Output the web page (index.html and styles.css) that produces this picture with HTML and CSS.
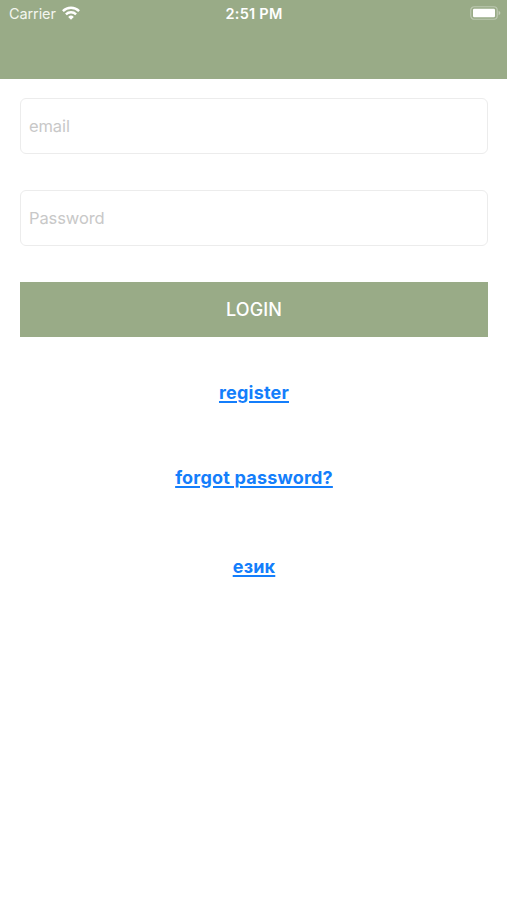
FILE: index.html
```html
<!DOCTYPE html>
<html lang="en">
<head>
  <meta charset="UTF-8">
  <title>Login</title>
  <meta name="viewport" content="width=device-width, initial-scale=1.0">
  <link rel="stylesheet" href="styles.css">
</head>
<body>
  <header class="header">
    <div class="status-bar">
      <div class="carrier">
        <span>Carrier</span>
        <svg class="wifi" viewBox="0 0 18 14" width="18" height="14">
          <path d="M.9 5.1a11.6 11.6 0 0 1 16.2 0M3.9 8.3a7.3 7.3 0 0 1 10.2 0" fill="none" stroke="#fff" stroke-width="2.4"/>
          <path d="M9 13.8L6.2 10.9a4 4 0 0 1 5.6 0z" fill="#fff"/>
        </svg>
      </div>
      <div class="time">2:51 PM</div>
      <svg class="battery" viewBox="0 0 31 14" width="31" height="14">
        <rect x="0.75" y="0.75" width="26.5" height="12.5" rx="3.5" fill="none" stroke="#fff" stroke-width="1.2" stroke-opacity="0.35"/>
        <rect x="3" y="2.7" width="22" height="8.6" rx="1.2" fill="#fff"/>
        <path d="M28.6 4.8q1.8.7 1.8 2.2t-1.8 2.2z" fill="#fff" fill-opacity="0.4"/>
      </svg>
    </div>
  </header>

  <form class="login-form">
    <input type="text" name="email" placeholder="email">
    <input type="password" name="password" placeholder="Password">
    <button type="submit">LOGIN</button>
  </form>

  <nav class="links">
    <a href="#">register</a>
    <a href="#">forgot password?</a>
    <a class="language" href="#" lang="bg">език</a>
  </nav>
</body>
</html>
```
FILE: styles.css
```css
body {
  margin: 0;
  font-family: Inter, sans-serif;
  background: #fff;
}

.header {
  height: 79px;
  background: #99ab87;
}

.status-bar {
  display: grid;
  grid-template-columns: 1fr auto 1fr;
  align-items: center;
  height: 26px;
  padding: 0 6px 0 9px;
  color: #fff;
  font-size: 14.5px;
}

.carrier {
  display: flex;
  align-items: center;
  gap: 6px;
  color: #f3f6ef;
  letter-spacing: -0.1px;
}

.time {
  padding-right: 2px;
  font-weight: 600;
  letter-spacing: 0.25px;
}

.battery {
  justify-self: end;
}

.login-form {
  display: flex;
  flex-direction: column;
  gap: 36px;
  padding: 19px 19px 0 20px;
}

input {
  box-sizing: border-box;
  width: 100%;
  height: 56px;
  padding: 0 8px 1px;
  border: 1px solid #ececec;
  border-radius: 6px;
  font-family: inherit;
  font-size: 16.5px;
  letter-spacing: -0.1px;
}

input::placeholder {
  color: #c8c8c8;
}

button {
  height: 55px;
  padding: 0;
  border: none;
  background: #99ab87;
  color: #fff;
  font-family: inherit;
  font-size: 18px;
  font-weight: 500;
  letter-spacing: 0.15px;
}

.links {
  display: flex;
  flex-direction: column;
  align-items: center;
  padding: 44px 0 0 1px;
}

.links a {
  height: 24px;
  margin-bottom: 61px;
  color: #147efb;
  font-size: 18px;
  font-weight: 650;
  letter-spacing: 0.2px;
  line-height: 24px;
  text-decoration-thickness: 2px;
  text-underline-offset: 2px;
}

.links .language {
  margin-top: 4px;
}
```
